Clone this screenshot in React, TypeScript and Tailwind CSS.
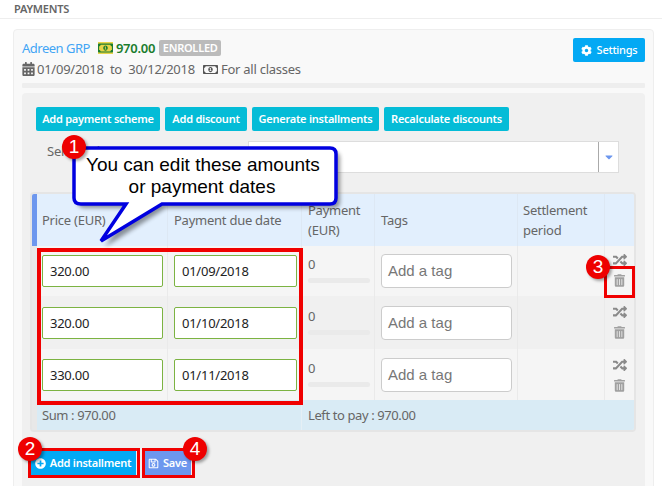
import { FaCalendarAlt, FaCaretDown, FaCog, FaPlusCircle, FaRandom, FaRegMoneyBillAlt, FaRegSave, FaTrashAlt } from "react-icons/fa";

const rows = [
  { price: "320.00", date: "01/09/2018", h: "h-[50px]", bg: "bg-[#f5f5f5]", top: "pt-[9px]", icons: "pt-[7px]" },
  { price: "320.00", date: "01/10/2018", h: "h-[53px]", bg: "bg-[#f0f0f0]", top: "pt-[11px]", icons: "pt-[9px]" },
  { price: "330.00", date: "01/11/2018", h: "h-[51px]", bg: "bg-[#f5f5f5]", top: "pt-[10px]", icons: "pt-[9px]" },
];

function Badge({ n, className }: { n: string; className: string }) {
  return (
    <div className={`absolute w-[24px] h-[24px] rounded-full bg-[#ee0000] text-white flex items-center justify-center text-[19px] tracking-normal shadow-[2px_2px_3px_rgba(0,0,0,0.35)] font-['Liberation_Sans',sans-serif] ${className}`}>
      {n}
    </div>
  );
}

export default function App() {
  return (
    <div className="relative w-[662px] h-[486px] overflow-hidden bg-white font-['Noto_Sans',sans-serif] text-[#666] text-[13px] tracking-[-0.25px]">
      <div className="h-[19px] border-b border-[#eee] px-[14px] text-[11px] font-semibold leading-[17px] text-[#666]">PAYMENTS</div>
      <div className="ml-[13px] mr-[8px] mt-[10px] h-[470px] border border-[#eee] rounded-[4px] bg-[#f9f9f9] px-[8px] pt-[8px]">
        <div className="flex justify-between h-[45px]">
          <div>
            <div className="flex items-center h-[20px] text-[13px] leading-[20px]">
              <span className="text-[#42a5f5] tracking-[-0.5px]">Adreen GRP</span>
              <FaRegMoneyBillAlt className="ml-[8px] text-[#1b7d2e] bg-[#e8d44a] w-[15px] h-[12px]" />
              <span className="ml-[3px] text-[#1b7d2e] font-semibold">970.00</span>
              <span className="ml-[4px] w-[62px] text-center h-[16px] leading-[16px] rounded-[2px] bg-[#bbb] text-white text-[11px] font-semibold">ENROLLED</span>
            </div>
            <div className="flex items-center h-[20px] mt-[1px] leading-[20px] whitespace-pre">
              <FaCalendarAlt className="w-[13px] h-[14px] text-[#666] mr-[2px]" />
              <span>01/09/2018  to  30/12/2018</span>
              <FaRegMoneyBillAlt className="ml-[8px] mr-[3px] w-[15px] h-[13px] text-[#555]" />
              <span>For all classes</span>
            </div>
          </div>
          <div className="h-[24px] w-[72px] rounded-[2px] bg-[#03a9f4] text-white text-[11px] font-medium flex items-center justify-center gap-[5px]">
            <FaCog className="w-[11px] h-[11px]" />
            Settings
          </div>
        </div>
        <div className="h-[5px] bg-[#eee] rounded-[1px]" />
        <div className="mt-[5px] h-[400px] rounded-[4px] bg-[#f0f0f0] px-[8px] pt-[14px]">
          <div className="flex gap-[5px] ml-[6px] text-white text-[11px] font-semibold">
            <div className="w-[124px] h-[24px] rounded-[2px] bg-[#04bcd7] flex items-center justify-center">Add payment scheme</div>
            <div className="w-[82px] h-[24px] rounded-[2px] bg-[#04bcd7] flex items-center justify-center">Add discount</div>
            <div className="w-[127px] h-[24px] rounded-[2px] bg-[#04bcd7] flex items-center justify-center">Generate installments</div>
            <div className="w-[125px] h-[24px] rounded-[2px] bg-[#04bcd7] flex items-center justify-center">Recalculate discounts</div>
          </div>
          <div className="flex mt-[10px] h-[32px] ml-[17px]">
            <div className="w-[201px] leading-[20px] text-[13px] whitespace-nowrap overflow-hidden">Select scheme</div>
            <div className="w-[371px] h-[32px] bg-white border border-[#ddd] flex justify-end">
              <div className="w-[20px] border-l border-[#aaa] flex items-center justify-center text-[#6d97ee]">
                <FaCaretDown className="w-[12px] h-[12px]" />
              </div>
            </div>
          </div>
          <div className="mt-[19px] w-[606px] border-2 border-[#e5e5e5] rounded-[4px] overflow-hidden">
            <div className="grid grid-cols-[131px_134px_73px_143px_87px_29px] h-[52px] border-l-[5px] border-[#6d97ee] bg-[#e2effd] leading-[20px]">
              <div className="flex items-center pl-[5px] border-r border-[#dde8f4]">Price (EUR)</div>
              <div className="flex items-center pl-[6px] border-r border-[#dde8f4]">Payment due date</div>
              <div className="flex items-center pl-[6px] border-r border-[#dde8f4]">Payment (EUR)</div>
              <div className="flex items-center pl-[6px] border-r border-[#dde8f4]">Tags</div>
              <div className="flex items-center pl-[5px] border-r border-[#dde8f4]">Settlement period</div>
              <div />
            </div>
            {rows.map((r) => (
              <div key={r.date} className={`grid grid-cols-[131px_134px_73px_143px_87px_29px] border-l-[5px] border-[#e8e8e8] ${r.h} ${r.bg}`}>
                <div className={`pl-[5px] border-r border-[#eaeaea] ${r.top}`}>
                  <div className="w-[121px] h-[32px] bg-white border border-[#7cb342] rounded-[2px] pl-[7px] leading-[30px] text-[#222]">{r.price}</div>
                </div>
                <div className={`pl-[6px] border-r border-[#eaeaea] ${r.top}`}>
                  <div className="w-[123px] h-[32px] bg-white border border-[#7cb342] rounded-[2px] pl-[7px] leading-[30px] text-[#222]">{r.date}</div>
                </div>
                <div className={`px-[6px] border-r border-[#eaeaea] ${r.top}`}>
                  <div className="leading-[18px]">0</div>
                  <div className="mt-[5px] h-[5px] w-[62px] rounded-full bg-[#eaeaea]" />
                </div>
                <div className={`pl-[6px] border-r border-[#eaeaea] ${r.top}`}>
                  <div className="-mt-[1px] w-[131px] h-[34px] bg-white border border-[#ccc] rounded-[4px] pl-[6px] leading-[32px] text-[15px] tracking-normal text-[#777] font-['Liberation_Sans',sans-serif]">Add a tag</div>
                </div>
                <div className="border-r border-[#eaeaea]" />
                <div className={`flex flex-col items-center gap-[7px] ${r.icons}`}>
                  <FaRandom className="w-[14px] h-[14px] text-[#8a8a8a]" />
                  <FaTrashAlt className="w-[11px] h-[13px] text-[#a0a0a0]" />
                </div>
              </div>
            ))}
            <div className="border-l-[5px] border-[#e8e8e8] grid grid-cols-[265px_337px] h-[30px] bg-[#d9ebf5] leading-[30px] tracking-[-0.4px]">
              <div className="pl-[5px] border-r border-[#e5eff5]">Sum : 970.00</div>
              <div className="pl-[6px]">Left to pay : 970.00</div>
            </div>
          </div>
          <div className="flex gap-[8px] mt-[19px] text-white text-[11px] font-semibold">
            <div className="w-[106px] h-[24px] bg-[#03a9f4] flex items-center justify-center gap-[4px]">
              <FaPlusCircle className="w-[11px] h-[11px]" />
              Add installment
            </div>
            <div className="w-[47px] h-[24px] bg-[#6d97ee] flex items-center justify-center gap-[4px]">
              <FaRegSave className="w-[11px] h-[11px]" />
              Save
            </div>
          </div>
        </div>
      </div>

      {/* Annotations */}
      <div className="absolute left-[37px] top-[248px] w-[266px] h-[157px] border-[4px] border-[#f00000]" />
      <div className="absolute left-[604px] top-[266px] w-[31px] h-[32px] border-[3px] border-[#f00000]" />
      <div className="absolute left-[28px] top-[448px] w-[112px] h-[30px] border-[3px] border-[#f00000]" />
      <div className="absolute left-[142px] top-[448px] w-[53px] h-[30px] border-[3px] border-[#f00000]" />
      <svg className="absolute left-[60px] top-[135px]" width="300" height="120" viewBox="0 0 300 120">
        <path d="M21 13 H270 Q276 13 276 19 V63 Q276 69 270 69 H102 L41 108 L66 69 H21 Q14 69 14 63 V19 Q14 13 21 13 Z" fill="#000" opacity="0.4" transform="translate(4 4)" style={{ filter: "blur(2px)" }} />
        <path d="M21 13 H270 Q276 13 276 19 V63 Q276 69 270 69 H102 L41 106 L66 69 H21 Q14 69 14 63 V19 Q14 13 21 13 Z" fill="#fff" stroke="#0000e0" strokeWidth="3.5" />
      </svg>
      <div className="absolute left-[86px] top-[154px] w-[232px] text-center whitespace-nowrap text-[19px] leading-[22px] tracking-normal text-black font-['Liberation_Sans',sans-serif]">
        You can edit these amounts
        <br />
        or payment dates
      </div>
      <Badge n="1" className="left-[62px] top-[135px]" />
      <Badge n="2" className="left-[18px] top-[437px]" />
      <Badge n="3" className="left-[586px] top-[255px]" />
      <Badge n="4" className="left-[183px] top-[437px]" />
    </div>
  );
}
